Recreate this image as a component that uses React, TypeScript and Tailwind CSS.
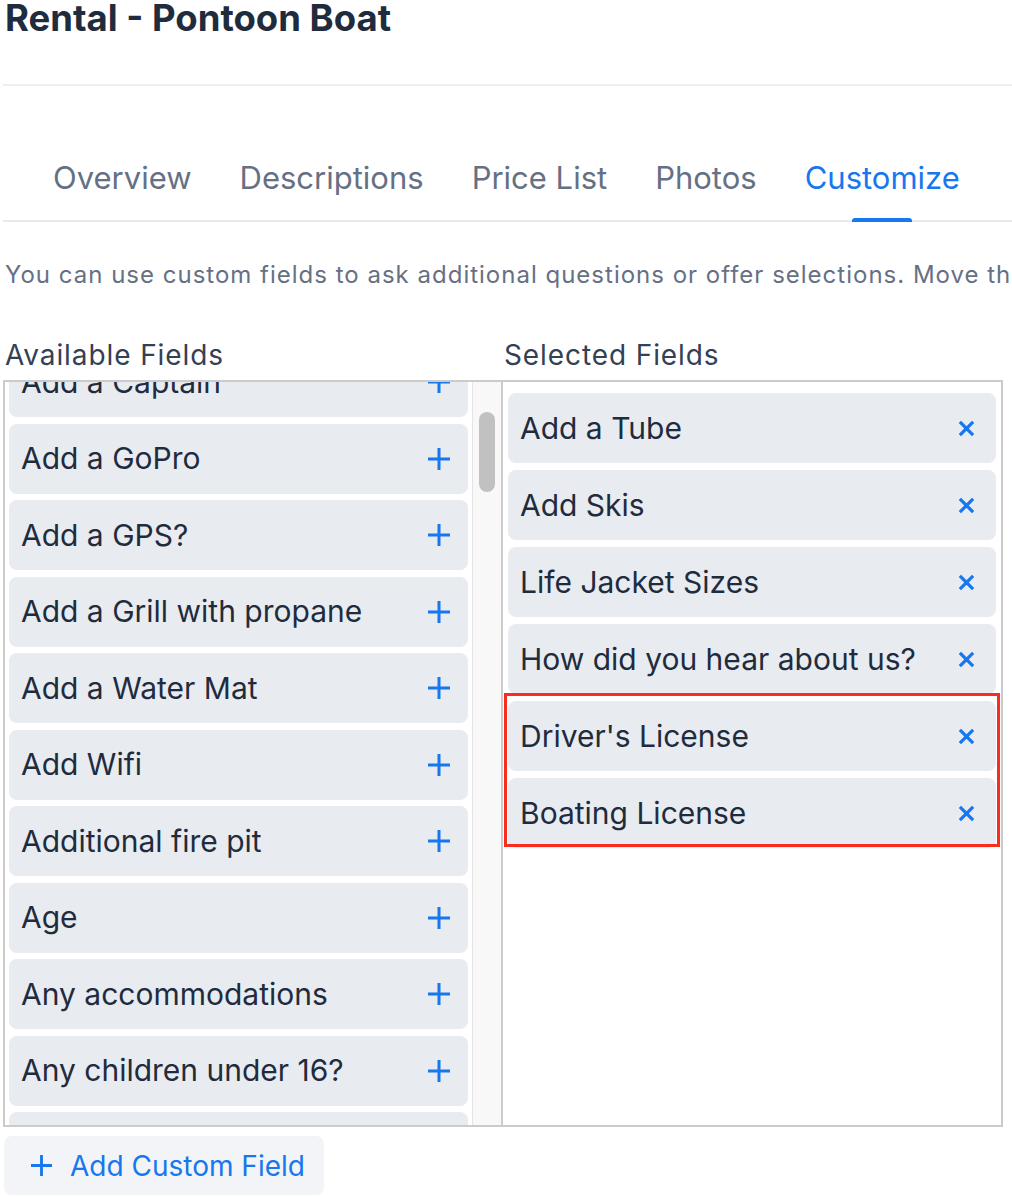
const available = [
  "Add a Captain",
  "Add a GoPro",
  "Add a GPS?",
  "Add a Grill with propane",
  "Add a Water Mat",
  "Add Wifi",
  "Additional fire pit",
  "Age",
  "Any accommodations",
  "Any children under 16?",
  "Anything else?",
];

const selected = [
  "Add a Tube",
  "Add Skis",
  "Life Jacket Sizes",
  "How did you hear about us?",
  "Driver's License",
  "Boating License",
];

const tabs = ["Overview", "Descriptions", "Price List", "Photos", "Customize"];

function PlusIcon({ className }: { className?: string }) {
  return (
    <svg viewBox="0 0 22 22" className={className} fill="none" stroke="currentColor" strokeWidth="3">
      <path d="M11 0v22M0 11h22" />
    </svg>
  );
}

function XIcon({ className }: { className?: string }) {
  return (
    <svg viewBox="0 0 18 18" className={className} fill="none" stroke="currentColor" strokeWidth="3.4">
      <path d="M2 2l14 14M16 2L2 16" />
    </svg>
  );
}

export default function App() {
  return (
    <div
      className="w-[1012px] h-[1197px] overflow-hidden bg-white"
      style={{ fontFamily: "Inter, 'Noto Sans', sans-serif" }}
    >
      {/* Header */}
      <div className="ml-[3px] flex h-[86px] flex-col border-b-2 border-[#eeeeee]">
        <h1 className="-mt-[5px] pl-[2px] text-[36.5px] leading-[46px] font-bold text-[#1f2c3d]">
          Rental - Pontoon Boat
        </h1>
      </div>

      {/* Tabs */}
      <div className="ml-[3px] mt-[50px] flex h-[86px] border-b-2 border-[#e6e9ee] pl-[26px]">
        {tabs.map((t) => (
          <div
            key={t}
            className={`relative flex items-center px-[24px] text-[31px] ${
              t === "Customize" ? "text-[#1677ee]" : "text-[#667085]"
            }`}
          >
            {t}
            {t === "Customize" && (
              <div className="absolute bottom-[-2px] left-1/2 h-[4px] w-[60px] -translate-x-1/2 rounded-t-[3px] bg-[#1677ee]" />
            )}
          </div>
        ))}
      </div>

      <p className="mt-[36px] whitespace-nowrap pl-[5px] text-[24px] leading-[34px] tracking-[1px] text-[#667085]">
        You can use custom fields to ask additional questions or offer selections. Move them between the lists to add or remove.
      </p>

      {/* Column headings */}
      <div className="mt-[46px] flex text-[28px] leading-[34px] tracking-[0.9px] text-[#344054]">
        <div className="w-[500px] pl-[5px]">Available Fields</div>
        <div className="pl-[4px]">Selected Fields</div>
      </div>

      {/* Lists */}
      <div className="mt-[8px] ml-[3px] flex h-[747px]">
        <div className="flex w-[500px] overflow-hidden border-2 border-[#cbcbcb]">
          <div className="flex-1 overflow-hidden px-[4px]">
            <div className="-mt-[35px] flex flex-col gap-[6.5px]">
              {available.map((f) => (
                <div
                  key={f}
                  className="flex h-[70px] shrink-0 items-center justify-between rounded-[8px] bg-[#e8ebf0] pl-[12px] pr-[18px] text-[30px] text-[#1f2c3d]"
                >
                  <span>{f}</span>
                  <PlusIcon className="h-[22px] w-[22px] text-[#1677ee]" />
                </div>
              ))}
            </div>
          </div>
          <div className="w-[29px] border-l border-[#e4e4e4] bg-[#f8f8f8] pt-[30px]">
            <div className="mx-auto h-[80px] w-[16px] rounded-full bg-[#c1c1c1]" />
          </div>
        </div>

        <div className="relative w-[500px] border-y-2 border-r-2 border-[#cbcbcb] px-[5px] pt-[11px]">
          <div className="flex flex-col gap-[7px]">
            {selected.map((f) => (
              <div
                key={f}
                className="flex h-[70px] items-center justify-between rounded-[8px] bg-[#e8ebf0] pl-[12px] pr-[21px] text-[30px] text-[#1f2c3d]"
              >
                <span>{f}</span>
                <XIcon className="h-[17px] w-[17px] text-[#1677ee]" />
              </div>
            ))}
          </div>
          {/* highlight annotation */}
          <div className="absolute left-[1px] top-[311px] h-[154px] w-[496px] border-[3px] border-[#f92d1e]" />
        </div>
      </div>

      {/* Add custom field */}
      <button className="mt-[9px] ml-[4px] flex h-[59px] w-[320px] items-center gap-[18px] rounded-[8px] bg-[#f2f4f7] pl-[27px] text-[28px] text-[#1677ee]">
        <PlusIcon className="h-[21px] w-[21px]" />
        <span>Add Custom Field</span>
      </button>
    </div>
  );
}
